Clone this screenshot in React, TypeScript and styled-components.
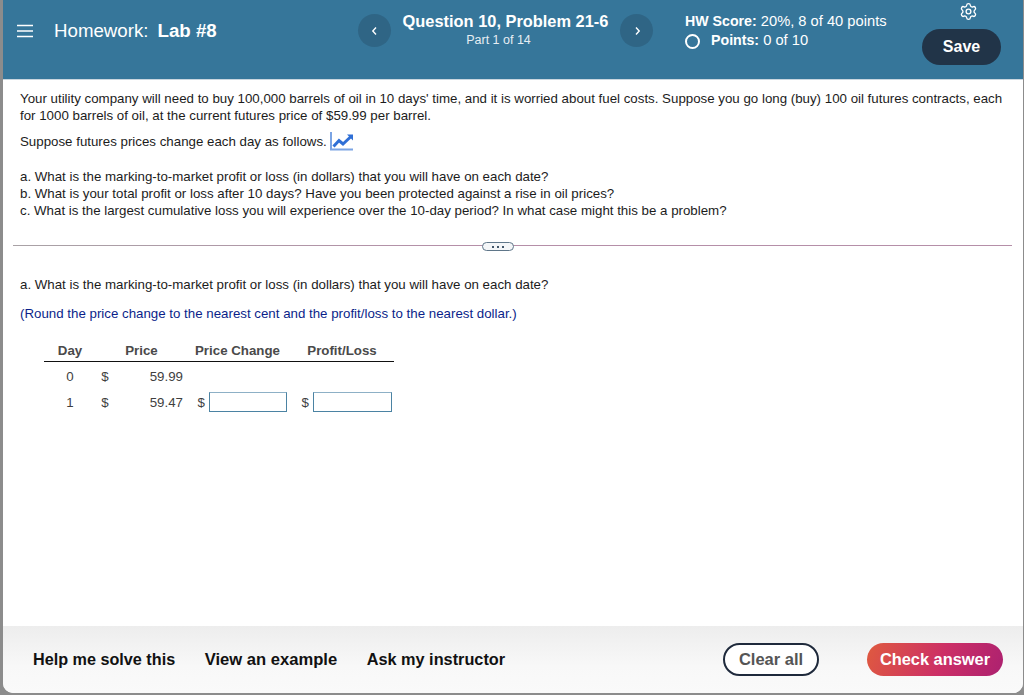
import React from 'react';
import styled, { createGlobalStyle } from 'styled-components';
import { Settings } from 'lucide-react';

const GlobalStyle = createGlobalStyle`
  html, body {
    margin: 0;
    padding: 0;
    height: 100%;
    overflow: hidden;
    background: #8c8c8c;
  }
  body, input, button {
    font-family: "Liberation Sans", Arial, sans-serif;
  }
`;

const Frame = styled.div`
  height: 695px;
  box-sizing: border-box;
  padding: 0 1px 2px 3px;
  background: #8c8c8c;
`;

const Win = styled.div`
  height: 100%;
  display: flex;
  flex-direction: column;
  background: #fff;
  border-radius: 0 0 10px 10px;
  overflow: hidden;
`;

const Header = styled.header`
  flex: 0 0 80px;
  box-sizing: border-box;
  display: grid;
  grid-template-columns: 355px 33px 229px 33px 1fr;
  background: #36769a;
  border-bottom: 1px solid #c9d6df;
  color: #fff;
`;

const HomeTitle = styled.div`
  display: flex;
  align-items: center;
  height: 62px;
  padding-left: 14px;
  font-size: 18.7px;

  b {
    margin-left: 9px;
  }
`;

const MenuIcon = styled.svg`
  width: 16px;
  height: 14px;
  margin-right: 21px;
`;

const NavCircle = styled.div`
  width: 33px;
  height: 33px;
  margin-top: 14px;
  border-radius: 50%;
  background: #2f6585;
  display: flex;
  align-items: center;
  justify-content: center;
`;

const QuestionBlock = styled.div`
  text-align: center;
  padding-top: 12px;
  white-space: nowrap;
`;

const QuestionTitle = styled.div`
  font-size: 16.4px;
  font-weight: 700;
  line-height: 18px;
`;

const PartLabel = styled.div`
  margin-top: 1px;
  padding-right: 14px;
  font-size: 12.5px;
  line-height: 18px;
  color: #e6eef3;
`;

const ScoreBlock = styled.div`
  display: flex;
  justify-content: space-between;
  padding: 0 22px 0 32px;
`;

const ScoreText = styled.div`
  padding-top: 12px;
  font-size: 14.7px;
  line-height: 19px;
  white-space: nowrap;

  b {
    font-size: 14.2px;
  }
`;

const PointsRow = styled.div`
  display: flex;
  align-items: center;
`;

const Ring = styled.span`
  width: 11px;
  height: 11px;
  margin: 1px 11px 0 0;
  border: 2px solid #fff;
  border-radius: 50%;
`;

const SaveColumn = styled.div`
  display: flex;
  flex-direction: column;
  align-items: center;
  padding-top: 2px;

  svg {
    margin-left: 14px;
  }
`;

const SaveButton = styled.button`
  width: 79px;
  height: 36px;
  margin-top: 8px;
  border: 0;
  border-radius: 18px;
  background: #213448;
  color: #fff;
  font-size: 16px;
  font-weight: 700;
`;

const Content = styled.main`
  flex: 1;
  min-height: 0;
  color: #1c1c1c;
  font-size: 13.3px;
`;

const Intro = styled.section`
  padding: 10px 17px 0 17px;
`;

const Para = styled.p`
  margin: 0 0 9px;
  line-height: 17px;
`;

const Chart = styled.svg`
  width: 24px;
  height: 20px;
  margin: -6px 0 -5px 3px;
  vertical-align: baseline;
`;

const Questions = styled.div`
  margin-top: 18px;
  line-height: 17px;
`;

const Divider = styled.div`
  position: relative;
  height: 1px;
  margin: 26px 11px 0 10px;
  background: linear-gradient(90deg, #a9a2a6, #b58fa8 45%);
`;

const Dots = styled.div`
  position: absolute;
  left: 469px;
  top: -3px;
  width: 32px;
  height: 9px;
  box-sizing: border-box;
  display: flex;
  align-items: center;
  justify-content: center;
  gap: 3px;
  border: 1px solid #5f7689;
  border-radius: 5px;
  background: #f4f6f8;
`;

const Dot = styled.span`
  width: 2px;
  height: 2px;
  background: #41566a;
`;

const Task = styled.section`
  padding: 31px 17px 0;
`;

const Hint = styled.p`
  margin: 13px 0 0;
  color: #0b1f8a;
  line-height: 17px;
`;

const Table = styled.table`
  margin: 18px 0 0 24px;
  border-collapse: collapse;
  table-layout: fixed;
  width: 350px;
  font-size: 13.3px;
  color: #3f3f3f;

  th {
    height: 21px;
    padding: 0;
    font-weight: 700;
    border-bottom: 1px solid #111;
    color: #4a4a4a;
  }
  td {
    height: 30px;
    padding: 0;
  }
  tbody tr:first-child td {
    height: 22px;
    padding-top: 3px;
  }
`;

const PriceHead = styled.th`
  padding-left: 4px !important;
`;

const ChangeHead = styled.th`
  padding-left: 2px !important;
`;

const Centered = styled.td`
  text-align: center;
`;

const Right = styled.td`
  text-align: right;
`;

const AnswerCell = styled.div<{ $inset: number }>`
  display: flex;
  align-items: center;
  justify-content: flex-end;
  gap: 4px;
  padding-right: ${(p) => p.$inset}px;
`;

const AnswerInput = styled.input<{ $width: number }>`
  width: ${(p) => p.$width}px;
  height: 20px;
  margin-top: -1px;
  box-sizing: border-box;
  border: 1px solid #4b83a3;
  border-top-color: #8db0c6;
  background: #fff;
  padding: 0;
`;

const Footer = styled.footer`
  flex: 0 0 67px;
  display: flex;
  align-items: center;
  padding: 0 20px 0 30px;
  background: linear-gradient(#ededed, #f8f8f8 60%, #fafafa);
`;

const HelpLink = styled.span<{ $size: number }>`
  margin-right: 29.5px;
  font-size: ${(p) => p.$size}px;
  font-weight: 700;
  color: #111;
`;

const ClearButton = styled.button`
  width: 96px;
  height: 33px;
  margin-left: auto;
  box-sizing: border-box;
  border: 2px solid #1f2a3c;
  border-radius: 17px;
  background: #fff;
  color: #555;
  font-size: 16.5px;
  font-weight: 700;
`;

const CheckButton = styled.button`
  width: 136px;
  height: 33px;
  margin-left: 48px;
  border: 0;
  border-radius: 17px;
  background: linear-gradient(110deg, #df5a3f, #cc2f66 55%, #ac2170);
  color: #fff;
  font-size: 16.4px;
  font-weight: 700;
`;

const questions = [
  'a. What is the marking-to-market profit or loss (in dollars) that you will have on each date?',
  'b. What is your total profit or loss after 10 days? Have you been protected against a rise in oil prices?',
  'c. What is the largest cumulative loss you will experience over the 10-day period? In what case might this be a problem?',
];

const helpLinks = [
  { label: 'Help me solve this', size: 16.2 },
  { label: 'View an example', size: 16.6 },
  { label: 'Ask my instructor', size: 16.3 },
];

function App() {
  return (
    <Frame>
      <GlobalStyle />
      <Win>
        <Header>
          <HomeTitle>
            <MenuIcon viewBox="0 0 16 14">
              <path d="M0 1.5h16M0 7h16M0 12.5h16" stroke="#fff" strokeWidth="1.4" fill="none" />
            </MenuIcon>
            Homework: <b>Lab #8</b>
          </HomeTitle>
          <NavCircle>
            <svg width="8" height="10" viewBox="0 0 8 10">
              <path d="M5 1.5 1.8 5 5 8.500" stroke="#fff" strokeWidth="1.4" fill="none" />
            </svg>
          </NavCircle>
          <QuestionBlock>
            <QuestionTitle>Question 10, Problem 21-6</QuestionTitle>
            <PartLabel>Part 1 of 14</PartLabel>
          </QuestionBlock>
          <NavCircle>
            <svg width="8" height="10" viewBox="0 0 8 10">
              <path d="M3 1.500 6.200 5 3 8.500" stroke="#fff" strokeWidth="1.4" fill="none" />
            </svg>
          </NavCircle>
          <ScoreBlock>
            <ScoreText>
              <div>
                <b>HW Score:</b> 20%, 8 of 40 points
              </div>
              <PointsRow>
                <Ring />
                <span>
                  <b>Points:</b> 0 of 10
                </span>
              </PointsRow>
            </ScoreText>
            <SaveColumn>
              <Settings size={19} strokeWidth={1.7} />
              <SaveButton>Save</SaveButton>
            </SaveColumn>
          </ScoreBlock>
        </Header>

        <Content>
          <Intro>
            <Para>
              Your utility company will need to buy 100,000 barrels of oil in 10 days' time, and it is worried about
              fuel costs. Suppose you go long (buy) 100 oil futures contracts, each for 1000 barrels of oil, at the
              current futures price of $59.99 per barrel.
            </Para>
            <Para>
              Suppose futures prices change each day as follows.
              <Chart viewBox="0 0 24 20">
                <path d="M1 1v17.500h22" stroke="#7ba4e4" strokeWidth="2" fill="none" />
                <path d="M3.500 15.500 9 9.500l4 3.500L21 5.500" stroke="#2f6fd6" strokeWidth="3" fill="none" />
                <path d="M17 3.500h6v6z" fill="#2f6fd6" />
              </Chart>
            </Para>
            <Questions>
              {questions.map((q) => (
                <div key={q}>{q}</div>
              ))}
            </Questions>
          </Intro>

          <Divider>
            <Dots>
              <Dot />
              <Dot />
              <Dot />
            </Dots>
          </Divider>

          <Task>
            <div>a. What is the marking-to-market profit or loss (in dollars) that you will have on each date?</div>
            <Hint>(Round the price change to the nearest cent and the profit/loss to the nearest dollar.)</Hint>
            <Table>
              <colgroup>
                <col width="52" />
                <col width="18" />
                <col width="69" />
                <col width="107" />
                <col width="104" />
              </colgroup>
              <thead>
                <tr>
                  <th>Day</th>
                  <PriceHead colSpan={2}>Price</PriceHead>
                  <ChangeHead>Price Change</ChangeHead>
                  <th>Profit/Loss</th>
                </tr>
              </thead>
              <tbody>
                <tr>
                  <Centered>0</Centered>
                  <Centered>$</Centered>
                  <Right>59.99</Right>
                  <td />
                  <td />
                </tr>
                <tr>
                  <Centered>1</Centered>
                  <Centered>$</Centered>
                  <Right>59.47</Right>
                  <td>
                    <AnswerCell $inset={3}>
                      $<AnswerInput $width={78} />
                    </AnswerCell>
                  </td>
                  <td>
                    <AnswerCell $inset={2}>
                      $<AnswerInput $width={79} />
                    </AnswerCell>
                  </td>
                </tr>
              </tbody>
            </Table>
          </Task>
        </Content>

        <Footer>
          {helpLinks.map((link) => (
            <HelpLink key={link.label} $size={link.size}>
              {link.label}
            </HelpLink>
          ))}
          <ClearButton>Clear all</ClearButton>
          <CheckButton>Check answer</CheckButton>
        </Footer>
      </Win>
    </Frame>
  );
}

export default App;
